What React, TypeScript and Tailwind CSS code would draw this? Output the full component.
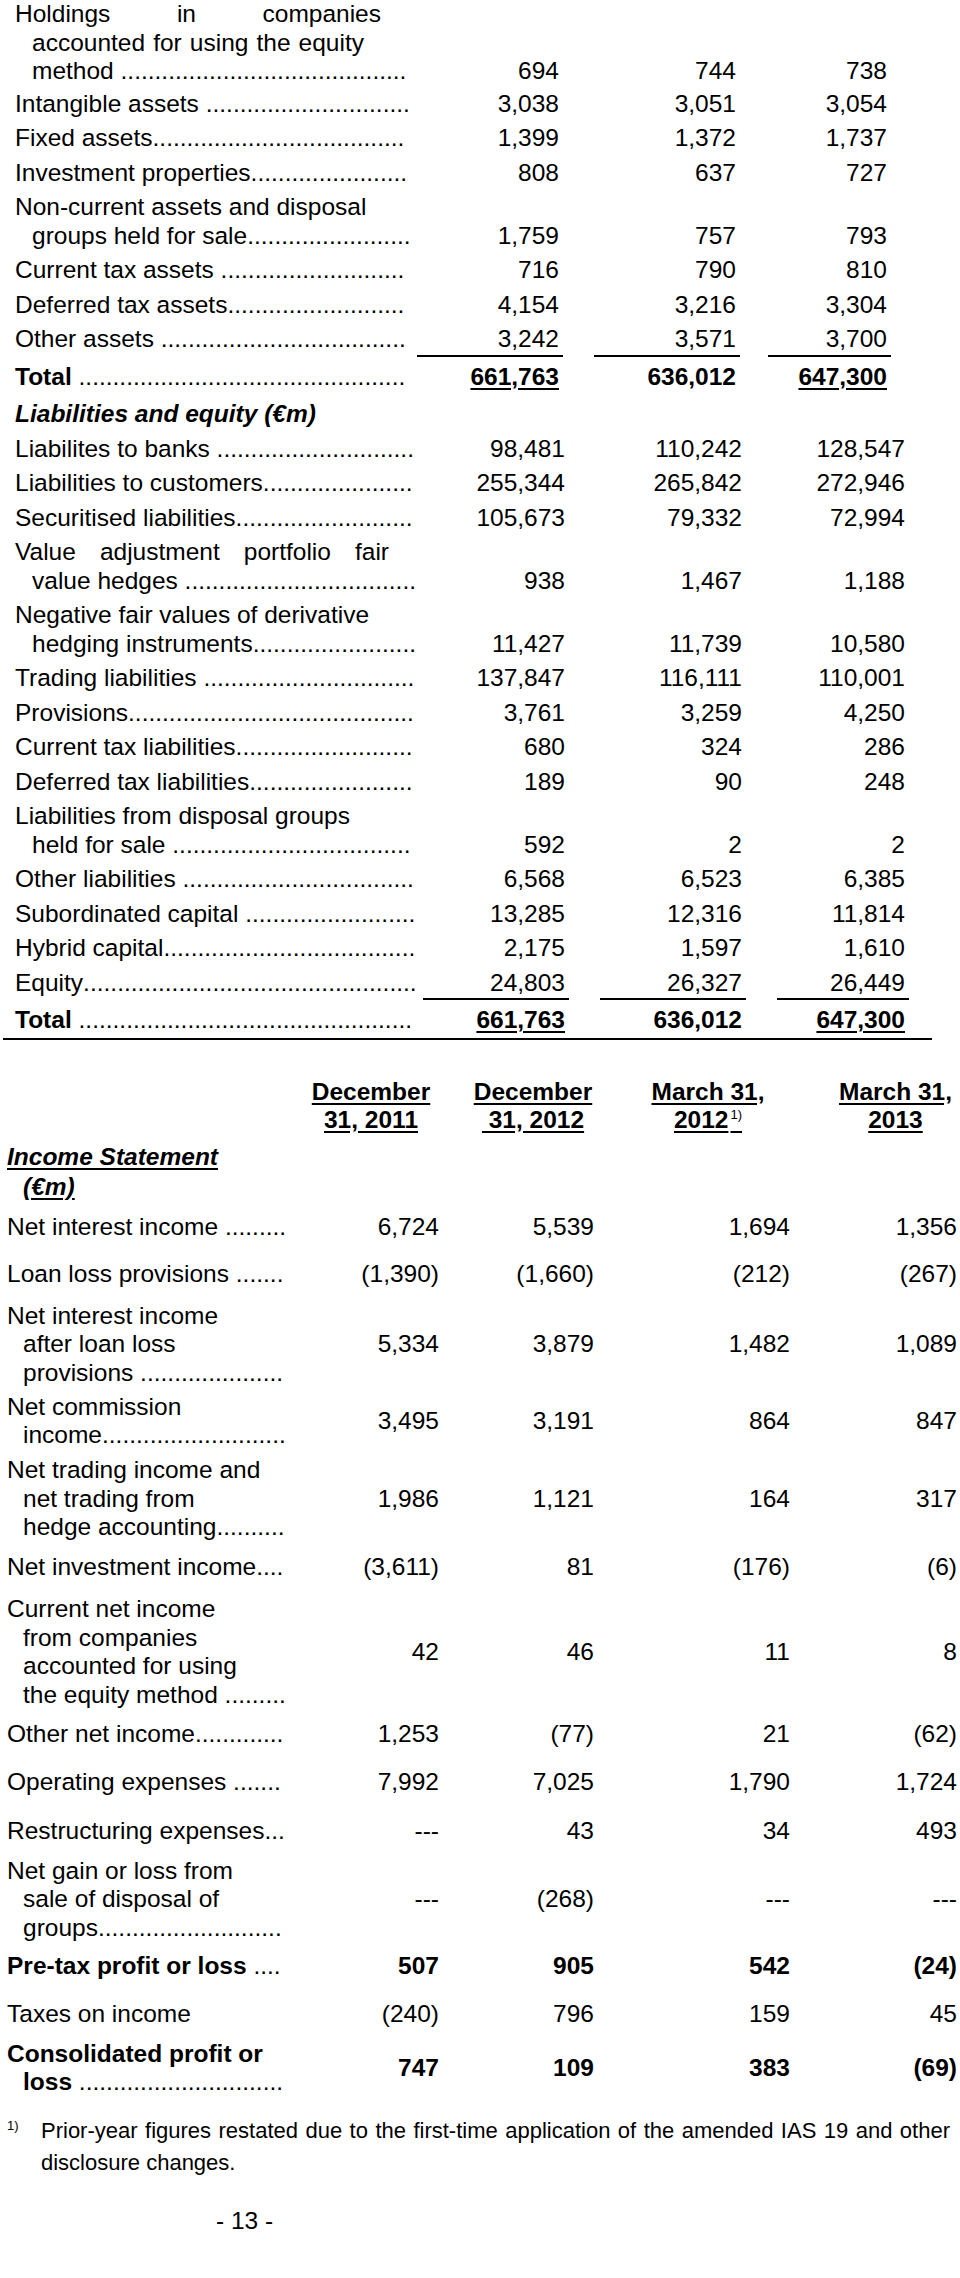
import React, { useLayoutEffect, useRef, useState } from "react";

type LineSpec = { t: string; cls?: string };

function Leader() {
  const ref = useRef<HTMLSpanElement>(null);
  const [n, setN] = useState(0);
  useLayoutEffect(() => {
    const el = ref.current;
    if (!el) return;
    const w = el.getBoundingClientRect().width;
    const ctx = document.createElement("canvas").getContext("2d");
    if (!ctx) return;
    const cs = getComputedStyle(el);
    ctx.font = `${cs.fontStyle} ${cs.fontWeight} ${cs.fontSize} ${cs.fontFamily}`;
    const dw = ctx.measureText(".").width || 6.8;
    setN(Math.max(0, Math.floor(w / dw)));
  }, []);
  return (
    <span ref={ref} className="min-w-0 flex-1 overflow-hidden whitespace-nowrap font-normal">
      {".".repeat(n)}
    </span>
  );
}

function Lines({
  lines,
  indentCls,
  dots = true,
}: {
  lines: LineSpec[];
  indentCls: string;
  dots?: boolean;
}) {
  return (
    <div className="flex min-w-0 flex-col">
      {lines.map((ln, i) => {
        const last = i === lines.length - 1;
        const ind = i > 0 ? indentCls : "";
        if (last && dots) {
          return (
            <div key={i} className={`flex whitespace-nowrap ${ind}`}>
              <span className="shrink-0 whitespace-pre">{ln.t}</span>
              <Leader />
            </div>
          );
        }
        return (
          <div key={i} className={`${ind} ${ln.cls ?? "whitespace-nowrap"}`}>
            {ln.t}
          </div>
        );
      })}
    </div>
  );
}

type BRowSpec = {
  lines: LineSpec[];
  vals: string[];
  ul?: boolean;
  total?: boolean;
  pad?: string;
};

const GA = {
  label: "w-[417px] shrink-0 pl-[15px] pr-[6px]",
  c: ["w-[146px]", "w-[146px] ml-[31px]", "w-[123px] ml-[28px]"],
};
const GB = {
  label: "w-[423px] shrink-0 pl-[15px] pr-[6px]",
  c: ["w-[146px]", "w-[146px] ml-[31px]", "w-[132px] ml-[31px]"],
};

const JUST = "whitespace-normal text-justify [text-align-last:justify]";

const secA: BRowSpec[] = [
  {
    lines: [
      { t: "Holdings in companies", cls: `w-[366px] ${JUST}` },
      { t: "accounted for using the equity", cls: `w-[349px] ${JUST}` },
      { t: "method " },
    ],
    vals: ["694", "744", "738"],
    pad: "pt-0 pb-[1px]",
  },
  { lines: [{ t: "Intangible assets " }], vals: ["3,038", "3,051", "3,054"] },
  { lines: [{ t: "Fixed assets" }], vals: ["1,399", "1,372", "1,737"] },
  { lines: [{ t: "Investment properties" }], vals: ["808", "637", "727"] },
  {
    lines: [{ t: "Non-current assets and disposal" }, { t: "groups held for sale" }],
    vals: ["1,759", "757", "793"],
  },
  { lines: [{ t: "Current tax assets " }], vals: ["716", "790", "810"] },
  { lines: [{ t: "Deferred tax assets" }], vals: ["4,154", "3,216", "3,304"] },
  { lines: [{ t: "Other assets " }], vals: ["3,242", "3,571", "3,700"], ul: true },
  { lines: [{ t: "Total " }], vals: ["661,763", "636,012", "647,300"], total: true },
];

const secB: BRowSpec[] = [
  { lines: [{ t: "Liabilites to banks " }], vals: ["98,481", "110,242", "128,547"] },
  { lines: [{ t: "Liabilities to customers" }], vals: ["255,344", "265,842", "272,946"] },
  { lines: [{ t: "Securitised liabilities" }], vals: ["105,673", "79,332", "72,994"] },
  {
    lines: [
      { t: "Value adjustment portfolio fair", cls: `w-[374px] ${JUST}` },
      { t: "value hedges " },
    ],
    vals: ["938", "1,467", "1,188"],
  },
  {
    lines: [{ t: "Negative fair values of derivative" }, { t: "hedging instruments" }],
    vals: ["11,427", "11,739", "10,580"],
  },
  { lines: [{ t: "Trading liabilities " }], vals: ["137,847", "116,111", "110,001"] },
  { lines: [{ t: "Provisions" }], vals: ["3,761", "3,259", "4,250"] },
  { lines: [{ t: "Current tax liabilities" }], vals: ["680", "324", "286"] },
  { lines: [{ t: "Deferred tax liabilities" }], vals: ["189", "90", "248"] },
  {
    lines: [{ t: "Liabilities from disposal groups" }, { t: "held for sale " }],
    vals: ["592", "2", "2"],
  },
  { lines: [{ t: "Other liabilities " }], vals: ["6,568", "6,523", "6,385"] },
  { lines: [{ t: "Subordinated capital " }], vals: ["13,285", "12,316", "11,814"] },
  { lines: [{ t: "Hybrid capital" }], vals: ["2,175", "1,597", "1,610"] },
  { lines: [{ t: "Equity" }], vals: ["24,803", "26,327", "26,449"], ul: true },
  { lines: [{ t: "Total " }], vals: ["661,763", "636,012", "647,300"], total: true },
];

function BRow({ r, g, indentCls }: { r: BRowSpec; g: typeof GA; indentCls: string }) {
  return (
    <div className={`flex items-end ${r.pad ?? "py-[3px]"} ${r.total ? "font-bold" : ""}`}>
      <div className={`${g.label} ${r.ul ? "pb-[3px]" : ""}`}>
        <Lines lines={r.lines} indentCls={indentCls} />
      </div>
      {r.vals.map((v, i) => (
        <div
          key={i}
          className={`${g.c[i]} shrink-0 whitespace-nowrap pr-[4px] text-right ${
            r.ul ? "border-b-2 border-black pb-[1px]" : ""
          }`}
        >
          {r.total && i !== 1 ? (
            <span className="underline decoration-2 underline-offset-[3px]">{v}</span>
          ) : (
            v
          )}
        </div>
      ))}
    </div>
  );
}

type IRowSpec = {
  lines: LineSpec[];
  vals: string[];
  mt: string;
  bold?: boolean;
  dots?: boolean;
};

const IC = [
  "w-[168px] pr-[16px]",
  "w-[156px] pr-[17px]",
  "w-[194px] pr-[15px]",
  "w-[155px] pr-[3px]",
];

const incRows: IRowSpec[] = [
  { lines: [{ t: "Net interest income " }], vals: ["6,724", "5,539", "1,694", "1,356"], mt: "mt-[11px]" },
  { lines: [{ t: "Loan loss provisions " }], vals: ["(1,390)", "(1,660)", "(212)", "(267)"], mt: "mt-[18.5px]" },
  {
    lines: [{ t: "Net interest income" }, { t: "after loan loss" }, { t: "provisions " }],
    vals: ["5,334", "3,879", "1,482", "1,089"],
    mt: "mt-[13.5px]",
  },
  {
    lines: [{ t: "Net commission" }, { t: "income" }],
    vals: ["3,495", "3,191", "864", "847"],
    mt: "mt-[5.5px]",
  },
  {
    lines: [{ t: "Net trading income and" }, { t: "net trading from" }, { t: "hedge accounting" }],
    vals: ["1,986", "1,121", "164", "317"],
    mt: "mt-[6.5px]",
  },
  { lines: [{ t: "Net investment income" }], vals: ["(3,611)", "81", "(176)", "(6)"], mt: "mt-[11.5px]" },
  {
    lines: [
      { t: "Current net income" },
      { t: "from companies" },
      { t: "accounted for using" },
      { t: "the equity method " },
    ],
    vals: ["42", "46", "11", "8"],
    mt: "mt-[13.5px]",
  },
  { lines: [{ t: "Other net income" }], vals: ["1,253", "(77)", "21", "(62)"], mt: "mt-[10.5px]" },
  { lines: [{ t: "Operating expenses " }], vals: ["7,992", "7,025", "1,790", "1,724"], mt: "mt-[19.5px]" },
  { lines: [{ t: "Restructuring expenses" }], vals: ["---", "43", "34", "493"], mt: "mt-[20.5px]" },
  {
    lines: [{ t: "Net gain or loss from" }, { t: "sale of disposal of" }, { t: "groups" }],
    vals: ["---", "(268)", "---", "---"],
    mt: "mt-[11.5px]",
  },
  {
    lines: [{ t: "Pre-tax profit or loss " }],
    vals: ["507", "905", "542", "(24)"],
    mt: "mt-[9.5px]",
    bold: true,
  },
  {
    lines: [{ t: "Taxes on income" }],
    vals: ["(240)", "796", "159", "45"],
    mt: "mt-[19.5px]",
    dots: false,
  },
  {
    lines: [{ t: "Consolidated profit or" }, { t: "loss " }],
    vals: ["747", "109", "383", "(69)"],
    mt: "mt-[11.5px]",
    bold: true,
  },
];

function IRow({ r }: { r: IRowSpec }) {
  return (
    <div className={`flex items-center ${r.mt} ${r.bold ? "font-bold" : ""}`}>
      <div className="w-[287px] shrink-0 pl-[7px]">
        <Lines lines={r.lines} indentCls="pl-[16px]" dots={r.dots !== false} />
      </div>
      {r.vals.map((v, i) => (
        <div key={i} className={`${IC[i]} shrink-0 whitespace-nowrap text-right`}>
          {v}
        </div>
      ))}
    </div>
  );
}

export default function App() {
  return (
    <div className="h-[2278px] w-[960px] overflow-hidden bg-white font-['Liberation_Sans',Arial,Helvetica,sans-serif] text-[24.5px] leading-[28.5px] text-black">
      {/* Assets part */}
      <div>
        {secA.map((r, i) => (
          <BRow key={i} r={r} g={GA} indentCls="pl-[17px]" />
        ))}
      </div>

      {/* Liabilities */}
      <div className="mt-[3px] py-[3px] pl-[15px] font-bold italic">Liabilities and equity (€m)</div>
      <div>
        {secB.map((r, i) => (
          <BRow key={i} r={r} g={GB} indentCls="pl-[17px]" />
        ))}
      </div>
      <div className="ml-[3px] h-[2px] w-[929px] bg-black" />

      {/* Income statement header */}
      <div className="mt-[38px] flex font-bold leading-[28px]">
        <div className="w-[287px] shrink-0" />
        <div className="w-[168px] shrink-0 text-center">
          <div>
            <span className="underline underline-offset-[3px]">December</span>
          </div>
          <div>
            <span className="underline underline-offset-[3px]">31, 2011</span>
          </div>
        </div>
        <div className="w-[156px] shrink-0 text-center">
          <div>
            <span className="underline underline-offset-[3px]">December</span>
          </div>
          <div>
            <span className="whitespace-pre underline underline-offset-[3px]"> 31, 2012</span>
          </div>
        </div>
        <div className="w-[194px] shrink-0 text-center">
          <div>
            <span className="underline underline-offset-[3px]">March 31,</span>
          </div>
          <div>
            <span className="underline underline-offset-[3px]">
              2012
              <span className="relative -top-[9px] ml-[2px] align-baseline text-[13px] font-normal">1)</span>
            </span>
          </div>
        </div>
        <div className="w-[155px] shrink-0 pl-[26px] text-center">
          <div>
            <span className="underline underline-offset-[3px]">March 31,</span>
          </div>
          <div>
            <span className="underline underline-offset-[3px]">2013</span>
          </div>
        </div>
      </div>

      <div className="mt-[4px] pl-[7px] font-bold italic leading-[30px]">
        <div>
          <span className="underline underline-offset-[3px]">Income Statement</span>
        </div>
        <div className="pl-[16px]">
          <span className="underline underline-offset-[3px]">(€m)</span>
        </div>
      </div>

      {incRows.map((r, i) => (
        <IRow key={i} r={r} />
      ))}

      {/* Footnote */}
      <div className="mt-[18px] flex text-[22px] leading-[32px]">
        <div className="w-[41px] shrink-0 pl-[7px]">
          <span className="relative -top-[8px] text-[13px] leading-none">1)</span>
        </div>
        <div className="w-[909px] shrink-0 text-justify">
          Prior-year figures restated due to the first-time application of the amended IAS 19 and other
          disclosure changes.
        </div>
      </div>

      <div className="mt-[28px] pl-[216px]">- 13 -</div>
    </div>
  );
}
